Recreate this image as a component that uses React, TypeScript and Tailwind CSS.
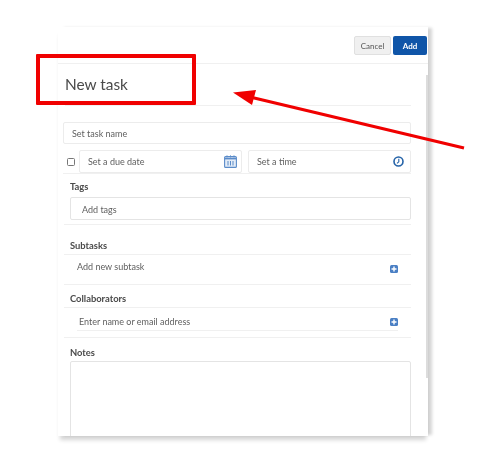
const PlusIcon = () => (
  <svg width="8" height="8" viewBox="0 0 8 8" className="shrink-0">
    <rect width="8" height="8" rx="1.5" fill="#4a7fc4" />
    <path d="M4 1.5v5M1.5 4h5" stroke="#fff" strokeWidth="1.4" />
  </svg>
);

const CalendarIcon = () => (
  <svg width="13" height="13" viewBox="0 0 13 13" fill="none" className="shrink-0">
    <rect x="0.6" y="1.6" width="11.8" height="10.8" rx="1" fill="#e3ecf7" stroke="#5b8cc9" strokeWidth="1.1" />
    <path d="M1 3.6h11" stroke="#5b8cc9" strokeWidth="1.6" />
    <path d="M3 .4v2M6.5 .4v2M10 .4v2M4 6v4.5M6.5 6v4.5M9 6v4.5" stroke="#5b8cc9" strokeWidth="1" />
  </svg>
);

const ClockIcon = () => (
  <svg width="11" height="11" viewBox="0 0 11 11" fill="none" className="shrink-0">
    <circle cx="5.5" cy="5.5" r="4.5" stroke="#2563a8" strokeWidth="1.6" />
    <path d="M5.8 2.8v3L4 7.4" stroke="#2563a8" strokeWidth="1.1" />
  </svg>
);

const SectionLabel = ({ children }: { children: string }) => (
  <p className="text-[9.4px] leading-[12px] font-bold text-[#4a4a4a]">{children}</p>
);

export default function App() {
  return (
    <div className="relative w-[486px] h-[452px] overflow-hidden bg-white font-['Lato','Open_Sans',sans-serif]">
      <div className="pt-[27px] pl-[58px] blur-[0.5px]">
        {/* panel */}
        <div className="relative w-[370px] h-[409px] bg-white shadow-[5px_0_3px_-1px_rgba(0,0,0,0.17),0_6px_4px_-2px_rgba(0,0,0,0.17)]">
          <div className="flex justify-end gap-[2px] pt-[9px] pb-[8px] pr-px">
            <button className="w-[37px] h-[19px] rounded-[2px] bg-[#f0f0f0] border border-[#e0e0e0] text-[8px] text-[#555]">
              Cancel
            </button>
            <button className="w-[34px] h-[19px] rounded-[2px] bg-[#0f55a8] text-[8px] font-bold text-white">
              Add
            </button>
          </div>

          <div className="h-[373px] overflow-hidden border-t border-[#f0f0f0] pl-[7px] pr-[17px]">
            <div className="h-[42px] flex items-center border-b border-[#f0f0f0]">
              <h1 className="text-[15.4px] text-[#4a4a4a]">New task</h1>
            </div>

            <div className="pt-[16px]">
              <div className="-ml-[2px] h-[22px] flex items-center pt-[2px] px-[8px] border border-[#ececec] rounded-[2px] text-[9px] text-[#606060]">
                Set task name
              </div>

              <div className="-ml-[2px] mt-[6px] flex items-center border-b border-[#f0f0f0]">
                <span className="ml-[4px] mr-[4px] w-[8px] h-[8px] rounded-[1.5px] border border-[#777] shrink-0" />
                <div className="w-[163px] h-[23px] flex items-center justify-between pl-[8px] pr-[4px] border border-[#ececec] rounded-[2px] text-[9px] text-[#606060]">
                  <span className="pt-px">Set a due date</span>
                  <CalendarIcon />
                </div>
                <div className="ml-[6px] w-[163px] h-[23px] flex items-center justify-between pl-[8px] pr-[6px] border border-[#ececec] rounded-[2px] text-[9px] text-[#606060]">
                  <span className="pt-px">Set a time</span>
                  <ClockIcon />
                </div>
              </div>

              <div className="pl-[5px] pt-[7px]">
                <SectionLabel>Tags</SectionLabel>
                <div className="mt-[4px] h-[23px] flex items-center pt-[2px] pl-[11px] border border-[#e4e4e4] rounded-[2px] text-[9px] text-[#606060]">
                  Add tags
                </div>
              </div>

              <div className="-ml-px mt-[4px] border-t border-[#f0f0f0] pl-[6px] pt-[15px]">
                <SectionLabel>Subtasks</SectionLabel>
              </div>
              <div className="-ml-px mt-[2px] h-[31px] border-y border-[#f0f0f0] flex justify-between pl-[13px] pr-[13px]">
                <span className="text-[9px] leading-[12px] mt-[6px] text-[#606060]">Add new subtask</span>
                <span className="mt-[10px]">
                  <PlusIcon />
                </span>
              </div>

              <div className="pl-[5px] pt-[8px]">
                <SectionLabel>Collaborators</SectionLabel>
              </div>
              <div className="-ml-px mt-[2px] border-t border-[#f0f0f0] pl-[13px] pr-[13px]">
                <div className="h-[23px] flex items-center justify-between border-b border-[#f0f0f0] pt-[5px] pl-[2px] text-[9px] text-[#606060]">
                  Enter name or email address
                  <PlusIcon />
                </div>
              </div>

              <div className="-ml-px mt-[6px] border-t border-[#f0f0f0] pl-[6px] pt-[9px]">
                <SectionLabel>Notes</SectionLabel>
                <div className="mt-[2px] h-[90px] border border-[#e4e4e4] rounded-[2px]" />
              </div>
            </div>
          </div>

          {/* scrollbar edge */}
          <div className="absolute right-0 top-[48px] w-[2px] h-[303px] bg-[#dcdcdc]" />
        </div>
      </div>

      {/* red annotation laid over the screenshot */}
      <div className="absolute left-[36px] top-[54px] w-[160px] h-[51px] border-[4px] border-[#f00000] rounded-[1px] blur-[0.3px]" />
      <svg className="absolute inset-0 blur-[0.3px]" width="486" height="452" viewBox="0 0 486 452" fill="none">
        <path d="M464 148L250 97" stroke="#f00000" strokeWidth="3.2" />
        <path d="M233 92.5L256 90L252 105Z" fill="#f00000" />
      </svg>
    </div>
  );
}
